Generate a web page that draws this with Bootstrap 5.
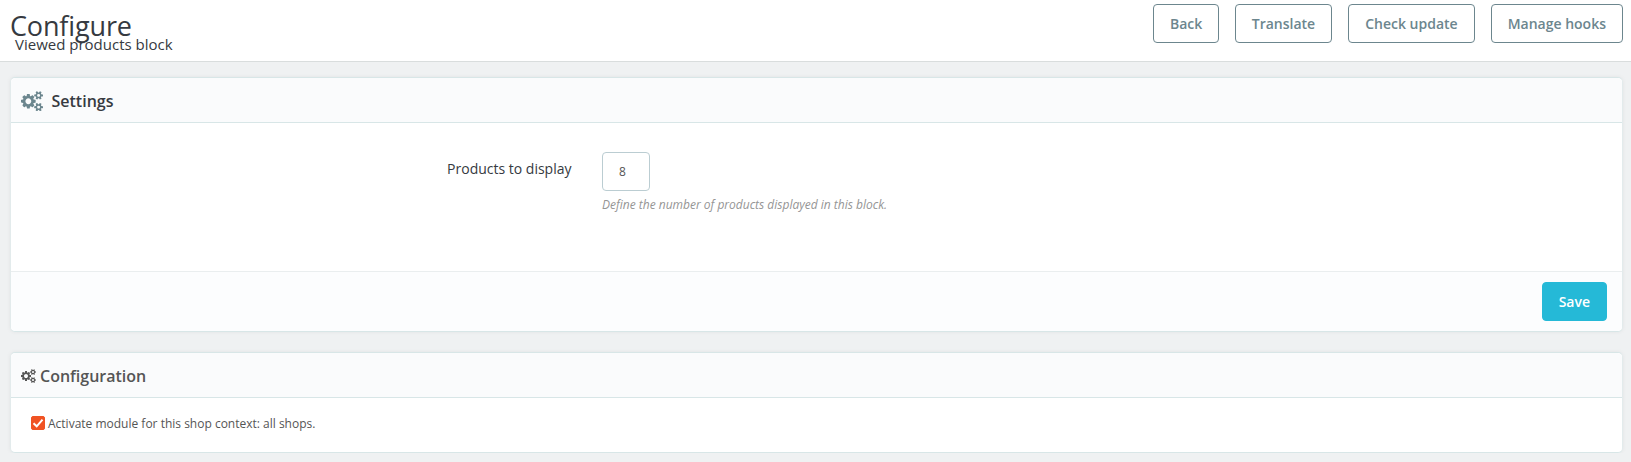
<!DOCTYPE html>
<html lang="en">
<head>
<meta charset="utf-8">
<title>Configure - Viewed products block</title>
<link href="https://cdn.jsdelivr.net/npm/bootstrap@5.3.0/dist/css/bootstrap.min.css" rel="stylesheet">
<style>
body{background:#eff1f2;font-family:"Open Sans","Noto Sans",sans-serif;font-size:12px;color:#555;line-height:1.42857}
.page-head{height:62px;border-bottom:1px solid #d9dddd;padding:4px 8px 0 10px;color:#363a41}
.page-head h1{font-size:27px;line-height:38px;font-weight:400;letter-spacing:-.15px;margin:3px 0 0}
.page-head h2{font-size:15px;line-height:20px;font-weight:400;margin:-11px 0 0 5px}
.btn{font-size:14px;font-weight:600;line-height:21px;padding:8px 16px;border-radius:4px}
.btn-tool{--bs-btn-color:#6c868e;--bs-btn-border-color:#6c868e;--bs-btn-hover-bg:#6c868e;--bs-btn-hover-color:#fff}
.btn-back{padding-right:15.5px;padding-left:15.5px}
.btn-save{--bs-btn-color:#fff;--bs-btn-bg:#25b9d7;--bs-btn-border-color:#25b9d7;--bs-btn-hover-bg:#21a6c1;--bs-btn-hover-color:#fff}
.page-body{padding-top:15px}
.panel{border:1px solid #d8e6e7;border-left-color:#e3ebec;border-right-color:#e3ebec;border-radius:5px;box-shadow:0 0 4px rgba(0,0,0,.06);margin:0 8px 0 10px;overflow:hidden}
.panel+.panel{margin-top:20px}
.panel>.card-header{background:#fafbfc;border-color:#d8e6e7;height:45px;padding:2px 10px 0;font-size:16px;font-weight:600}
.panel>.card-footer{background:#fcfdfe;border-color:#eaeeef;height:60px;padding:10px 15px}
.head-dark{color:#363a41;gap:8.5px}
.settings-body{height:148px;padding:29px 0 0;gap:30.5px}
.field-label{width:560.5px;font-size:14px;line-height:20px;padding-top:7px;color:#363a41}
.count-field{width:48px;height:39px;font-size:12px;padding:0 16px;border:1px solid #bbcdd2;border-radius:4px;color:#555}
.hint{font-style:italic;color:#959595;line-height:17px;margin-top:5px}
.form-check-input.shop-check{width:14px;height:14px;margin:-1px 0 0;border-radius:2px;background-color:#f05323;border-color:#f05323;background-image:none}
.check-line{padding:17px 0 0 20px;height:54px}
.check-line label{gap:3px}
</style>
<script src="https://cdn.jsdelivr.net/npm/bootstrap@5.3.0/dist/js/bootstrap.bundle.min.js"></script>
</head>
<body>
<svg class="d-none" aria-hidden="true">
<symbol id="cogs" viewBox="0 0 1920 1792"><path d="M896 896q0-106-75-181t-181-75-181 75-75 181 75 181 181 75 181-75 75-181zm768 512q0-52-38-90t-90-38-90 38-38 90q0 53 37.5 90.5t90.5 37.5 90.5-37.5 37.5-90.5zm0-1024q0-52-38-90t-90-38-90 38-38 90q0 53 37.5 90.5t90.5 37.5 90.5-37.5 37.5-90.5zm-384 421v185q0 10-7 19.5t-16 10.5l-155 24q-11 35-32 76 34 48 90 115 7 11 7 20 0 12-7 19-23 30-82.5 89.5t-78.5 59.5q-11 0-21-7l-115-90q-37 19-77 31-11 108-23 155-7 24-30 24h-186q-11 0-20-7.5t-10-17.5l-23-153q-34-10-75-31l-118 89q-7 7-20 7-11 0-21-8-144-133-144-160 0-9 7-19 10-14 41-53t47-61q-23-44-35-82l-152-24q-10-1-17-9.5t-7-19.5v-185q0-10 7-19.5t16-10.5l155-24q11-35 32-76-34-48-90-115-7-11-7-20 0-12 7-20 22-30 82-89t79-59q11 0 21 7l115 90q34-18 77-32 11-108 23-154 7-24 30-24h186q11 0 20 7.5t10 17.5l23 153q34 10 75 31l118-89q8-7 20-7 11 0 21 8 144 133 144 160 0 8-7 19-12 16-42 54t-45 60q23 48 34 82l152 23q10 2 17 10.5t7 19.5zm640 533v140q0 16-149 31-12 27-30 52 51 113 51 138 0 4-4 7-122 71-124 71-8 0-46-47t-52-68q-20 2-30 2t-30-2q-14 21-52 68t-46 47q-2 0-124-71-4-3-4-7 0-25 51-138-18-25-30-52-149-15-149-31v-140q0-16 149-31 13-29 30-52-51-113-51-138 0-4 4-7 4-2 35-20t59-34 30-16q8 0 46 46.5t52 67.5q20-2 30-2t30 2q51-71 92-112l6-2q4 0 124 70 4 3 4 7 0 25-51 138 17 23 30 52 149 15 149 31zm0-1024v140q0 16-149 31-12 27-30 52 51 113 51 138 0 4-4 7-122 71-124 71-8 0-46-47t-52-68q-20 2-30 2t-30-2q-14 21-52 68t-46 47q-2 0-124-71-4-3-4-7 0-25 51-138-18-25-30-52-149-15-149-31v-140q0-16 149-31 13-29 30-52-51-113-51-138 0-4 4-7 4-2 35-20t59-34 30-16q8 0 46 46.5t52 67.5q20-2 30-2t30 2q51-71 92-112l6-2q4 0 124 70 4 3 4 7 0 25-51 138 17 23 30 52 149 15 149 31z"/></symbol>
</svg>
<header class="page-head bg-white d-flex justify-content-between align-items-start">
  <div>
    <h1>Configure</h1>
    <h2>Viewed products block</h2>
  </div>
  <div class="d-flex gap-3">
    <a class="btn btn-tool btn-back" href="#">Back</a>
    <a class="btn btn-tool" href="#">Translate</a>
    <a class="btn btn-tool" href="#">Check update</a>
    <a class="btn btn-tool" href="#">Manage hooks</a>
  </div>
</header>
<main class="page-body d-flex flex-column">
  <form class="card panel">
    <div class="card-header head-dark d-flex align-items-center">
      <svg width="22" height="20.5" fill="#6c868e"><use href="#cogs"/></svg>Settings
    </div>
    <div class="settings-body d-flex">
      <label class="field-label text-end" for="count">Products to display</label>
      <div>
        <input id="count" class="form-control count-field" type="text" value="8">
        <div class="hint">Define the number of products displayed in this block.</div>
      </div>
    </div>
    <div class="card-footer text-end"><button type="button" class="btn btn-save">Save</button></div>
  </form>
  <section class="card panel">
    <div class="card-header d-flex align-items-center">
      <svg width="15" height="14" fill="#555" class="me-1"><use href="#cogs"/></svg>Configuration
    </div>
    <div class="check-line">
      <label class="d-flex align-items-center">
        <span class="shop-check form-check-input d-flex"><svg width="12" height="12" viewBox="0 0 12 12" fill="none" stroke="#fff" stroke-width="2"><path d="M1.5 6.3 4.7 9.3 10.5 2.7"/></svg></span>
        <span>Activate module for this shop context: all shops.</span>
      </label>
    </div>
  </section>
</main>
</body>
</html>
